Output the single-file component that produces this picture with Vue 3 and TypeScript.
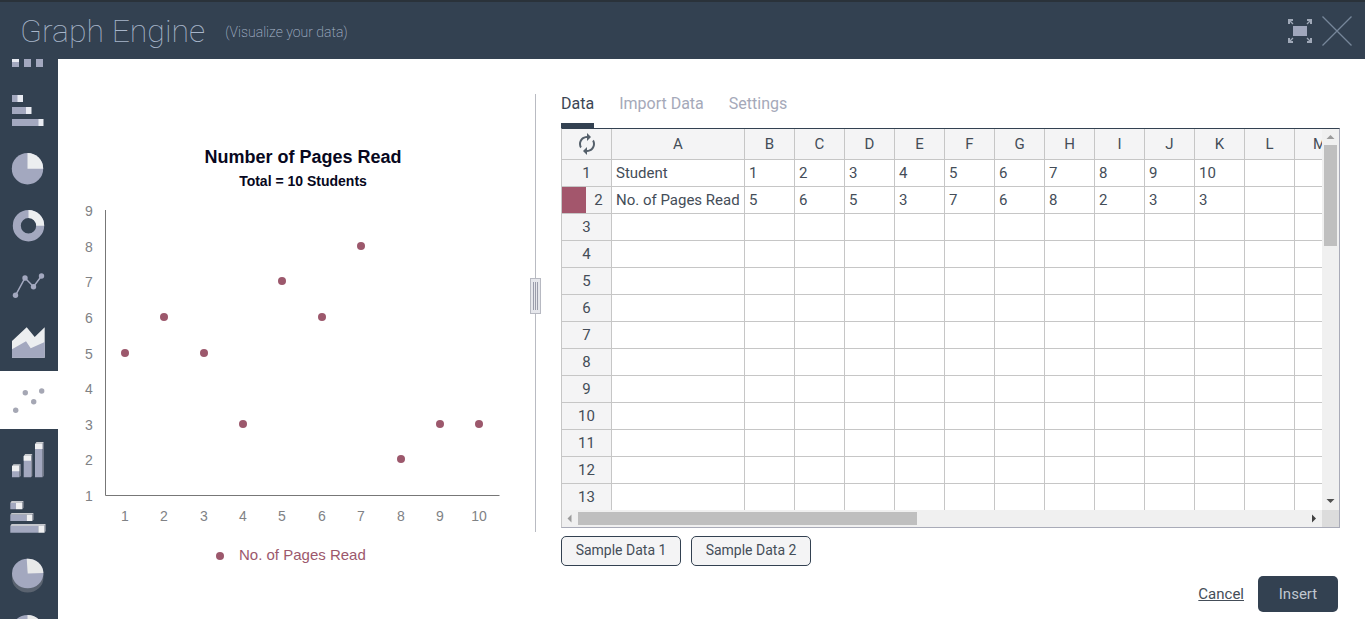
<script setup lang="ts">
import { computed, ref } from 'vue'

interface ChartType {
  id: string
  label: string
}

const chartTypes: ChartType[] = [
  { id: 'column', label: 'Column chart' },
  { id: 'bar', label: 'Bar chart' },
  { id: 'pie', label: 'Pie chart' },
  { id: 'donut', label: 'Donut chart' },
  { id: 'line', label: 'Line chart' },
  { id: 'area', label: 'Area chart' },
  { id: 'scatter', label: 'Scatter chart' },
  { id: 'column3d', label: '3D column chart' },
  { id: 'bar3d', label: '3D bar chart' },
  { id: 'pie3d', label: '3D pie chart' },
  { id: 'donut3d', label: '3D donut chart' },
]
const activeType = ref('scatter')

const tabs = ['Data', 'Import Data', 'Settings']
const activeTab = ref('Data')

const columns = 'ABCDEFGHIJKLM'.split('')
const sheet: string[][] = [
  ['Student', '1', '2', '3', '4', '5', '6', '7', '8', '9', '10'],
  ['No. of Pages Read', '5', '6', '5', '3', '7', '6', '8', '2', '3', '3'],
]
const rowCount = 13

const plot = { left: 47, top: 70, width: 394, height: 285, min: 1, max: 9 }
const yOf = (value: number) =>
  Math.round(plot.top + plot.height - ((value - plot.min) / (plot.max - plot.min)) * plot.height)
const yTicks = Array.from({ length: 9 }, (_, i) => i + 1)
const points = computed(() => {
  const labels = sheet[0].slice(1)
  const values = sheet[1].slice(1).map(Number)
  const band = plot.width / labels.length
  return labels.map((label, i) => ({
    label,
    x: Math.round(plot.left + band * (i + 0.5)),
    y: yOf(values[i]),
  }))
})
</script>

<template>
  <div class="app">
    <header class="header">
      <h1>Graph Engine</h1>
      <p class="tagline">(Visualize your data)</p>
      <div class="window-actions">
        <button type="button" aria-label="Full screen">
          <svg width="24" height="24" viewBox="0 0 24 24">
            <rect x="5" y="7" width="14" height="10" fill="#a0a7bc" />
            <g fill="none" stroke="#a0a9b8">
              <path d="M1 5V1h4M19 1h4v4M1 19v4h4M19 23h4v-4" stroke-width="2" />
              <path d="M1 1l4 4M23 1l-4 4M1 23l4-4M23 23l-4-4" stroke-width="1.300" />
            </g>
          </svg>
        </button>
        <button type="button" aria-label="Close">
          <svg width="30" height="30" viewBox="0 0 30 30">
            <path d="M.5 .5l29 29M29.5 .5l-29 29" stroke="#76869a" stroke-width="1.3" />
          </svg>
        </button>
      </div>
    </header>

    <div class="body">
      <nav class="sidebar" aria-label="Chart types">
        <ul>
          <li v-for="type in chartTypes" :key="type.id">
            <button
              type="button"
              :class="{ active: type.id === activeType }"
              :aria-label="type.label"
              @click="activeType = type.id"
            >
              <svg width="58" height="58" viewBox="0 0 58 58" fill="#a3a8bf">
                <template v-if="type.id === 'column'">
                  <path d="M12 33h7v11h-7zM24 24h7v20h-7zM36 13h7v31h-7z" />
                  <path d="M12 33h7v6h-7zM24 24h7v6h-7zM36 13h7v6h-7z" fill="#e9ebf2" />
                </template>
                <template v-else-if="type.id === 'bar'">
                  <path d="M12 14h6v7h-6zM12 26h14v7H12zM12 38h27v7H12z" />
                  <path d="M17.500 14H23v7h-5.500zM26 26h5.500v7H26zM38.500 38h5v7h-5z" fill="#e9ebf2" />
                </template>
                <template v-else-if="type.id === 'pie'">
                  <circle cx="27.5" cy="29.700" r="15.700" />
                  <path d="M27.500 29.700V14a15.700 15.700 0 0 1 15.700 15.700z" fill="#eceef0" />
                </template>
                <template v-else-if="type.id === 'donut'">
                  <circle cx="28.500" cy="28.700" r="11.700" fill="none" stroke="#a3a8bf" stroke-width="8" />
                  <path d="M28.500 17a11.700 11.700 0 0 1 11.700 11.700" fill="none" stroke="#eceef0" stroke-width="8" />
                </template>
                <template v-else-if="type.id === 'line'">
                  <path d="M15.500 40.300L25 23l8.500 8.700 8-10.700" fill="none" stroke="#a3a8bf" stroke-width="1.500" />
                  <circle cx="15.500" cy="40.300" r="2.700" />
                  <circle cx="25" cy="23" r="2.700" />
                  <circle cx="33.500" cy="31.700" r="2.700" />
                  <circle cx="41.500" cy="21" r="2.700" />
                </template>
                <template v-else-if="type.id === 'area'">
                  <path d="M12 28l14.700-13.700 8 9.700 10-9.700v30.400H12z" fill="#eceef0" />
                  <path d="M12 36.300l14-8 4.700 7 14-6.300v15.700H12z" />
                </template>
                <g v-else-if="type.id === 'scatter'" fill="#a5a7b4">
                  <circle cx="15.700" cy="39.300" r="2.700" />
                  <circle cx="25.300" cy="21.700" r="2.700" />
                  <circle cx="33.700" cy="30.700" r="2.700" />
                  <circle cx="41.700" cy="20" r="2.700" />
                </g>
                <template v-else-if="type.id === 'column3d'">
                  <path d="M12 37h7.300v11.300H12zM23.700 27H31v21.300h-7.300zM35 15h7.500v33.300H35z" />
                  <path
                    d="M19.300 37l1.500-1.700V47l-1.500 1.300zM31 27l1.300-2v22L31 48.300zM42.500 15l1.200-2v34l-1.200 1.300z"
                    fill="#8b8f9e"
                  />
                  <path d="M12 37h7.300v5.300H12zM23.700 27H31v4.700h-7.300zM35 15h7.500v5H35z" fill="#f0f0f2" />
                  <path
                    d="M12 37l1.500-1.700h7.300L19.300 37zM23.700 27l1.500-2h7.100L31 27zM35 15l1.500-2h7.200l-1.200 2z"
                    fill="#c9cbcf"
                  />
                </template>
                <template v-else-if="type.id === 'bar3d'">
                  <path d="M10.300 16H16v6.300h-5.700zM10.300 27.700h16.500V34H10.300zM10.300 39h28v6.700h-28z" />
                  <path
                    d="M10.300 16l1.300-2h12l-1.300 2zM10.300 27.700l1.300-1.700h22l-1.300 1.700zM10.300 39l1.300-2h34.200l-1.300 2z"
                    fill="#c5c7cd"
                  />
                  <path d="M22.300 16l1.300-2v6.800l-1.300 1.500zM32.300 27.700l1.300-1.700v6.800L32.300 34zM44.500 39l1.300-2v7l-1.300 1.700z" fill="#8f939f" />
                  <path d="M16 16h6.300v6.300H16zM26.700 27.700h5.600V34h-5.600zM38.300 39h6.200v6.700h-6.200z" fill="#f0f0f2" />
                </template>
                <template v-else-if="type.id === 'pie3d'">
                  <path d="M12 28.500h31.400v4.500a15.700 14.500 0 0 1-31.400 0z" fill="#5a6370" />
                  <ellipse cx="27.700" cy="28.500" rx="15.700" ry="14.700" />
                  <path d="M27.700 28.500l-1-14.700a15.700 14.700 0 0 1 16.700 14.200z" fill="#e8e9e9" />
                </template>
                <template v-else>
                  <ellipse cx="27.500" cy="26.700" rx="15.700" ry="14.700" />
                  <path d="M27.500 26.700V12a15.700 14.700 0 0 1 15.700 14.700z" fill="#e8e9e9" />
                </template>
              </svg>
            </button>
          </li>
        </ul>
      </nav>

      <main class="main">
        <div class="workspace">
          <section class="chart" aria-label="Chart preview">
            <svg viewBox="0 0 472 440" role="img" aria-label="Number of Pages Read">
              <text class="title" x="245" y="23">Number of Pages Read</text>
              <text class="subtitle" x="245" y="46">Total = 10 Students</text>
              <path
                :d="`M${plot.left + 0.5} ${plot.top}v${plot.height + 0.5}h${plot.width}`"
                fill="none"
                stroke="#777777"
              />
              <text v-for="tick in yTicks" :key="tick" class="axis" x="31" :y="yOf(tick) + 6">{{ tick }}</text>
              <g v-for="point in points" :key="point.label">
                <text class="axis" :x="point.x" y="381">{{ point.label }}</text>
                <circle :cx="point.x" :cy="point.y" r="4" fill="#9c586c" />
              </g>
              <circle cx="162" cy="416" r="4" fill="#9c586c" />
              <text class="legend" x="181" y="420">{{ sheet[1][0] }}</text>
            </svg>
          </section>

          <div class="splitter" role="separator" aria-orientation="vertical">
            <span class="grip">
              <i></i>
              <i></i>
              <i></i>
            </span>
          </div>

          <section class="data" aria-label="Data">
            <div class="tabs" role="tablist">
              <button
                v-for="tab in tabs"
                :key="tab"
                type="button"
                role="tab"
                :aria-selected="tab === activeTab"
                :class="{ active: tab === activeTab }"
                @click="activeTab = tab"
              >
                {{ tab }}
              </button>
            </div>

            <div class="sheet">
              <div class="viewport">
                <table>
                  <colgroup>
                    <col class="col-index" />
                    <col class="col-label" />
                    <col v-for="name in columns.slice(1)" :key="name" class="col-value" />
                  </colgroup>
                  <thead>
                    <tr>
                      <th>
                        <button type="button" class="swap" aria-label="Swap rows and columns">
                          <svg width="24" height="24" viewBox="0 0 24 24" fill="#55606b">
                            <path
                              d="M12 6v3l4-4-4-4v3c-4.420 0-8 3.580-8 8 0 1.570.460 3.030 1.240 4.260L6.700 14.800c-.450-.830-.700-1.790-.700-2.800 0-3.310 2.690-6 6-6zm6.760 1.740L17.300 9.200c.440.840.700 1.790.700 2.800 0 3.310-2.690 6-6 6v-3l-4 4 4 4v-3c4.420 0 8-3.580 8-8 0-1.570-.460-3.030-1.240-4.260z"
                            />
                          </svg>
                        </button>
                      </th>
                      <th v-for="name in columns" :key="name" scope="col">{{ name }}</th>
                    </tr>
                  </thead>
                  <tbody>
                    <tr v-for="row in rowCount" :key="row">
                      <th scope="row">
                        <div class="index">
                          <span v-if="row === 2" class="swatch"></span>
                          <span class="number">{{ row }}</span>
                        </div>
                      </th>
                      <td v-for="(name, c) in columns" :key="name">{{ sheet[row - 1]?.[c] }}</td>
                    </tr>
                  </tbody>
                </table>
              </div>
              <div class="scrollbar vertical" aria-hidden="true">
                <svg width="17" height="16" viewBox="0 0 17 16"><path d="M4.500 10l4-4 4 4z" fill="#9b9b9b" /></svg>
                <div class="track"><div class="thumb"></div></div>
                <svg width="17" height="17" viewBox="0 0 17 17"><path d="M4.500 6l4 4 4-4z" fill="#505050" /></svg>
              </div>
              <div class="scrollbar horizontal" aria-hidden="true">
                <svg width="16" height="17" viewBox="0 0 16 17"><path d="M9.500 4.500l-4 4 4 4z" fill="#9b9b9b" /></svg>
                <div class="track"><div class="thumb"></div></div>
                <svg width="17" height="17" viewBox="0 0 17 17"><path d="M7 4.500l4 4-4 4z" fill="#404040" /></svg>
              </div>
              <div class="corner"></div>
            </div>

            <div class="samples">
              <button type="button">Sample Data 1</button>
              <button type="button">Sample Data 2</button>
            </div>
          </section>
        </div>

        <footer class="footer">
          <a href="#">Cancel</a>
          <button type="button">Insert</button>
        </footer>
      </main>
    </div>
  </div>
</template>

<style>
body {
  margin: 0;
}
</style>

<style scoped>
.app {
  display: flex;
  flex-direction: column;
  height: 100vh;
  overflow: hidden;
  background: #fff;
  color: #444d58;
  font-family: Roboto, 'Liberation Sans', sans-serif;
  font-size: 15px;
}
.app * {
  box-sizing: border-box;
}
button {
  margin: 0;
  padding: 0;
  border: 0;
  background: none;
  color: inherit;
  font: inherit;
  cursor: pointer;
}
svg {
  display: block;
}

.header {
  display: flex;
  flex: none;
  align-items: center;
  height: 59px;
  padding: 0 13px 0 20px;
  border-top: 2px solid #2a323a;
  background: #334151;
  color: #a8b6ca;
}
h1 {
  margin: 0;
  font-size: 32px;
  font-weight: 100;
  line-height: 40px;
}
.tagline {
  margin: 2px 0 0 20px;
  font-size: 14px;
  font-weight: 200;
  line-height: 20px;
}
.window-actions {
  display: flex;
  align-items: center;
  gap: 10px;
  margin-left: auto;
}

.body {
  display: flex;
  flex: 1;
  min-height: 0;
}
.sidebar {
  flex: none;
  width: 58px;
  overflow: hidden;
  background: #334151;
}
.sidebar ul {
  margin: -36px 0 0;
  padding: 0;
  list-style: none;
}
.sidebar button {
  display: block;
}
.sidebar button.active {
  background: #fff;
}

.main {
  display: flex;
  flex: 1;
  flex-direction: column;
  min-width: 0;
  padding: 35px 25px 7px 0;
}
.workspace {
  display: grid;
  flex: 1;
  grid-template-columns: 472px 11px minmax(0, 1fr);
  grid-template-rows: minmax(0, 1fr);
  min-height: 0;
}
.chart {
  padding-top: 46px;
}
.chart svg {
  width: 100%;
  font-family: 'Liberation Sans', Arial, sans-serif;
}
.chart text {
  text-anchor: middle;
}
.chart .title {
  fill: #070720;
  font-size: 18px;
  font-weight: bold;
}
.chart .subtitle {
  fill: #070720;
  font-size: 14px;
  font-weight: bold;
}
.chart .axis {
  fill: #808285;
  font-size: 14px;
}
.chart .legend {
  fill: #9c586c;
  font-size: 15px;
  text-anchor: start;
}

.splitter {
  position: relative;
  margin-bottom: 34px;
  background: linear-gradient(#b9bbc2, #b9bbc2) center / 1px 100% no-repeat;
  cursor: col-resize;
}
.grip {
  position: absolute;
  top: 42%;
  left: 0;
  display: flex;
  justify-content: center;
  gap: 1px;
  width: 11px;
  height: 36px;
  padding: 3px 0;
  border: 1px solid #b7b9c2;
  background: #e6e7ec;
}
.grip i {
  width: 1px;
  background: #9a9cab;
}

.data {
  display: flex;
  flex-direction: column;
  min-width: 0;
  padding-left: 20px;
}
.tabs {
  display: flex;
  flex: none;
  gap: 25px;
  height: 34px;
}
.tabs button {
  padding-bottom: 10px;
  border-bottom: 5px solid transparent;
  color: #a5a9b9;
  font-size: 16px;
  line-height: 19px;
}
.tabs button.active {
  border-color: #334151;
  color: #3b4654;
}
.sheet {
  display: grid;
  flex: 1;
  grid-template-columns: minmax(0, 1fr) 17px;
  grid-template-rows: minmax(0, 1fr) 17px;
  min-height: 0;
  border: 1px solid #a9abb8;
  border-top-color: #334151;
  border-left-color: #c6c6c6;
}
.viewport {
  overflow: hidden;
}
table {
  width: 783px;
  border-collapse: separate;
  border-spacing: 0;
  table-layout: fixed;
}
.col-index,
.col-value {
  width: 50px;
}
.col-label {
  width: 133px;
}
th,
td {
  height: 27px;
  padding: 0;
  border-right: 1px solid #c6c6c6;
  border-bottom: 1px solid #c6c6c6;
  font-weight: 400;
  line-height: 18px;
  white-space: nowrap;
}
th {
  background: #f4f4f5;
}
thead th {
  height: 31px;
}
td {
  padding-left: 4px;
}
.swap {
  display: block;
  margin: 0 auto;
}
.index {
  display: flex;
  align-items: center;
  height: 26px;
}
.swatch {
  flex: none;
  width: 24px;
  height: 26px;
  background: #a3566c;
}
.number {
  flex: 1;
}

.scrollbar {
  display: flex;
  background: #f0f0f0;
}
.vertical {
  flex-direction: column;
}
.horizontal {
  grid-row: 2;
}
.track {
  flex: 1;
}
.vertical .track {
  padding: 0 2px;
}
.horizontal .track {
  padding: 2px 0;
}
.thumb {
  height: 100%;
  background: #bfbfbf;
}
.vertical .thumb {
  height: 29%;
}
.horizontal .thumb {
  width: calc(100% * 7 / 15);
}
.corner {
  background: #dcdcdc;
}

.samples {
  display: flex;
  flex: none;
  gap: 10px;
  margin-top: 8px;
}
.samples button {
  width: 120px;
  height: 30px;
  padding-bottom: 2px;
  border: 1px solid #334151;
  border-radius: 5px;
  background: #f4f4f5;
  font-size: 14px;
}

.footer {
  display: flex;
  flex: none;
  align-items: center;
  justify-content: flex-end;
  gap: 14px;
  margin-top: 10px;
  padding-right: 2px;
}
.footer a {
  color: inherit;
}
.footer button {
  width: 80px;
  height: 36px;
  border-radius: 5px;
  background: #334151;
  color: #c0c7d0;
}
</style>
